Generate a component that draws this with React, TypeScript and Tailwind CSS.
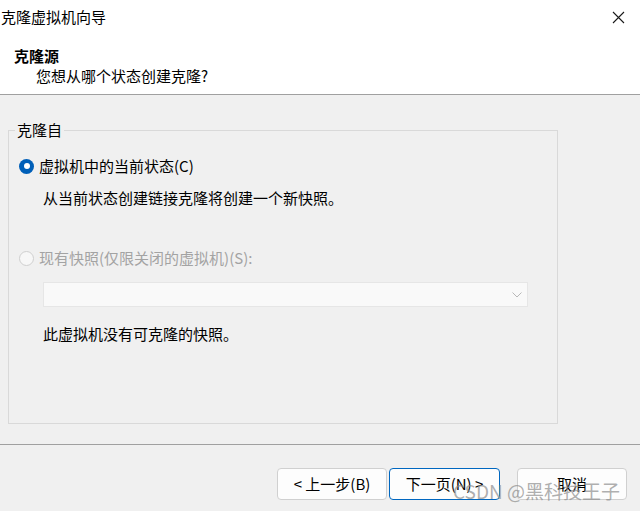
import React from "react"

const font = { fontFamily: '"Noto Sans CJK SC", "Noto Sans", sans-serif' }

function Radio({ checked, disabled }: { checked?: boolean; disabled?: boolean }) {
  if (checked) {
    return (
      <span className="flex h-[15px] w-[15px] items-center justify-center rounded-full bg-[#005fb8]">
        <span className="h-[6px] w-[6px] rounded-full bg-white" />
      </span>
    )
  }
  return (
    <span
      className={
        disabled
          ? "h-[15px] w-[15px] rounded-full border border-[#cfcfcf] bg-[#f7f7f7]"
          : "h-[15px] w-[15px] rounded-full border border-[#8a8a8a] bg-white"
      }
    />
  )
}

export default function App() {
  return (
    <div
      className="relative flex h-[511px] w-[640px] flex-col overflow-hidden bg-[#f0f0f0] text-[15px] leading-[20px] text-black"
      style={font}
    >
      {/* header */}
      <div className="h-[95px] border-b border-[#a0a0a0] bg-white">
        <div className="flex h-[34px] items-center justify-between pl-[1px] pr-[15px]">
          <span>克隆虚拟机向导</span>
          <svg width="13" height="13" viewBox="0 0 13 13">
            <path d="M1 1 L12 12 M12 1 L1 12" stroke="#1a1a1a" strokeWidth="1.1" />
          </svg>
        </div>
        <div className="mt-[12px] pl-[14px] font-bold">克隆源</div>
        <div className="pl-[36px]">您想从哪个状态创建克隆?</div>
      </div>

      {/* body */}
      <div className="flex-1">
        <div className="relative ml-[8px] mt-[35px] h-[294px] w-[550px] border border-[#d9d9d9]">
          <span className="absolute -top-[11px] left-[6px] bg-[#f0f0f0] px-[2px]">克隆自</span>

          <div className="mt-[25px] flex h-[20px] items-center gap-[5px] pl-[10px]">
            <Radio checked />
            <span>虚拟机中的当前状态(C)</span>
          </div>
          <div className="mt-[12px] h-[20px] pl-[34px]">从当前状态创建链接克隆将创建一个新快照。</div>

          <div className="mt-[40px] flex h-[20px] items-center gap-[5px] pl-[10px] text-[#a3a3a3]">
            <Radio disabled />
            <span>现有快照(仅限关闭的虚拟机)(S):</span>
          </div>
          <div className="ml-[34px] mt-[14px] flex h-[25px] w-[485px] items-center justify-end border border-[#e6e6e6] bg-[#f9f9f9] pr-[5px]">
            <svg width="10" height="6" viewBox="0 0 10 6">
              <path d="M0.5 0.5 L5 5 L9.5 0.5" stroke="#b8b8b8" strokeWidth="1" fill="none" />
            </svg>
          </div>
          <div className="mt-[17px] h-[20px] pl-[34px]">此虚拟机没有可克隆的快照。</div>
        </div>
      </div>

      {/* footer */}
      <div className="h-[67px] border-t border-[#a0a0a0]">
        <div className="mt-[23px] flex text-[15px]">
          <button className="ml-[277px] h-[32px] w-[110px] rounded-[4px] border border-[#d0d0d0] bg-[#fdfdfd]">
            &lt; 上一步(B)
          </button>
          <button className="ml-[2px] h-[32px] w-[111px] rounded-[4px] border border-[#0067c0] bg-[#fdfdfd]">
            下一页(N) &gt;
          </button>
          <button className="ml-[17px] h-[32px] w-[110px] rounded-[4px] border border-[#d0d0d0] bg-[#fdfdfd]">
            取消
          </button>
        </div>
      </div>

      {/* watermark */}
      <span className="pointer-events-none absolute left-[453px] top-[478px] text-[19px] leading-[26px] text-[#8c8c8c]/70">
        CSDN @黑科技王子
      </span>
    </div>
  )
}
